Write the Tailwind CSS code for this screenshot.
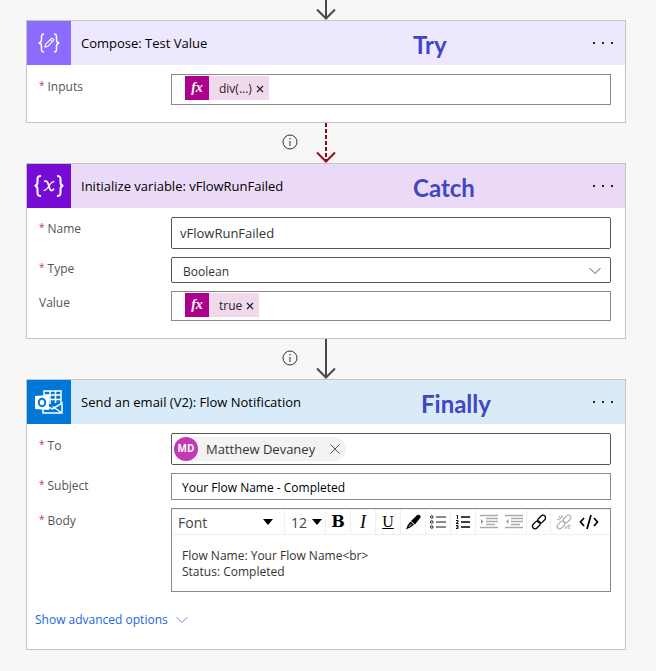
<!DOCTYPE html>
<html lang="en">
<head>
    <meta charset="UTF-8" />
    <meta name="viewport" content="width=device-width, initial-scale=1.0" />
    <title>Flow - Try, Catch, Finally</title>
    <script src="https://cdn.jsdelivr.net/npm/@tailwindcss/browser@4"></script>
</head>
<body class="bg-[#f7f7f7] font-['Open_Sans','Noto_Sans',sans-serif] text-xs text-[#333]">
    <main class="pl-[26px] pr-[30px] pb-5">
        <div class="flex h-5 justify-center">
            <svg class="h-5 w-6" viewBox="0 0 24 20" fill="none" stroke="#484848" stroke-width="2"><path d="M12 0v18M3 9.500l9 9 9-9" /></svg>
        </div>

        <!-- Try -->
        <section class="border border-[#c4c4c4] bg-white">
            <header class="relative flex h-11 items-center bg-[#ede8fe] text-black">
                <div class="flex size-11 shrink-0 items-center justify-center bg-[#8c6cff]">
                    <svg class="size-6" viewBox="0 0 24 24" fill="none" stroke="#fff" stroke-width="1.500">
                        <path d="M7 3C4.500 3 4.500 4 4.500 6v3c0 2-1 2.800-2.800 3 1.800.2 2.800 1 2.800 3v3c0 2 0 3 2.500 3M17 3c2.500 0 2.500 1 2.500 3v3c0 2 1 2.800 2.800 3-1.800.2-2.800 1-2.800 3v3c0 2 0 3-2.500 3" />
                        <path d="M8 16l.8-3 5.600-5.400c1.200-1 3 .8 2 2L11 15.200zM13.300 8.700l2 2" stroke-width="1.100" />
                    </svg>
                </div>
                <h2 class="pt-px pl-[10px] text-[13px]">Compose: Test Value</h2>
                <span class="absolute left-[386px] pt-1 font-['Lato',sans-serif] text-2xl font-bold text-[#4146c2]">Try</span>
                <button type="button" aria-label="More" class="ml-auto mr-3 flex w-5 justify-between"><i class="size-[2px] bg-[#222]"></i><i class="size-[2px] bg-[#222]"></i><i class="size-[2px] bg-[#222]"></i></button>
            </header>
            <div class="grid grid-cols-[132px_1fr] pt-[9px] pr-[14px] pb-[17px] pl-3">
                <span class="flex gap-[3px] pt-[5px] text-[#555]"><span class="text-[10px] text-[#d13438]">*</span>Inputs</span>
                <div class="flex h-[31px] items-start border border-[#8a8a8a] pt-px pl-[13px]">
                    <div class="flex h-6 items-center bg-[#f1d9ec] pr-[3px]">
                        <span class="flex size-6 items-center justify-center bg-[#ad008c] font-['Liberation_Serif',serif] text-sm font-bold italic text-white">fx</span>
                        <span class="pt-[2px] pl-[10px] text-[#222]">div(...)</span>
                        <button type="button" aria-label="Remove" class="ml-[2px] px-[2px] pt-[2px]"><svg class="size-2" viewBox="0 0 8 8" stroke="#222" stroke-width="1.200"><path d="M1 1l6 6M7 1L1 7" /></svg></button>
                    </div>
                </div>
            </div>
        </section>

        <div class="relative flex h-10 justify-center">
            <svg class="absolute top-[11px] left-[256px] size-4" viewBox="0 0 16 16" fill="none" stroke="#333"><circle cx="8" cy="8" r="7" /><path d="M8 7v5M8 4v1.500" /></svg>
            <svg class="h-10 w-6" viewBox="0 0 24 40" fill="none" stroke="#8b0a14" stroke-width="2"><path d="M12 0v38" stroke-dasharray="4 2" /><path d="M3 29.500l9 9 9-9" stroke="#a00a12" /></svg>
        </div>

        <!-- Catch -->
        <section class="border border-[#c4c4c4] bg-white">
            <header class="relative flex h-11 items-center bg-[#ebdaf7] text-black">
                <div class="flex size-11 shrink-0 items-center justify-center bg-[#770bd6]">
                    <svg class="h-6 w-8" viewBox="0 0 32 24" fill="none" stroke="#fff" stroke-width="2">
                        <path d="M8 2C5 2 4.500 3 4.500 5v3.500c0 2-.8 3-2.800 3.200 2 .2 2.800 1.200 2.800 3.200V19c0 2 .5 3 3.500 3M24 2c3 0 3.500 1 3.500 3v3.500c0 2 .8 3 2.800 3.200-2 .2-2.800 1.200-2.800 3.200V19c0 2-.5 3-3.500 3" />
                        <path d="M11 7.500c2-1 3.300-.4 4.100 2.100l1.600 5.200c.7 2.200 2.500 2.400 4.300 0" stroke-width="1.800" />
                        <path d="M21.500 7.800c-2.500-.8-3.800 1.500-5.500 4.200-1.700 2.800-3 4.900-5.500 4.300" stroke-width="1.300" />
                    </svg>
                </div>
                <h2 class="pt-px pl-[10px] text-[13px]">Initialize variable: vFlowRunFailed</h2>
                <span class="absolute left-[386px] pt-1 font-['Lato',sans-serif] text-2xl font-bold text-[#4146c2]">Catch</span>
                <button type="button" aria-label="More" class="ml-auto mr-3 flex w-5 justify-between"><i class="size-[2px] bg-[#222]"></i><i class="size-[2px] bg-[#222]"></i><i class="size-[2px] bg-[#222]"></i></button>
            </header>
            <div class="grid grid-cols-[132px_1fr] gap-y-2 pt-[9px] pr-[14px] pb-[17px] pl-3">
                <label for="name" class="flex gap-[3px] pt-1 text-[#555]"><span class="text-[10px] text-[#d13438]">*</span>Name</label>
                <input id="name" type="text" value="vFlowRunFailed" class="h-8 w-full rounded-xs border border-[#555] px-2 text-[13px]" />
                <label for="type" class="flex gap-[3px] pt-1 text-[#555]"><span class="text-[10px] text-[#d13438]">*</span>Type</label>
                <div class="relative">
                    <select id="type" class="block h-[26px] w-full appearance-none rounded-xs border border-[#555] px-[11px] pt-[3px]"><option>Boolean</option></select>
                    <svg class="pointer-events-none absolute top-[10px] right-[10px] h-2 w-3" viewBox="0 0 12 8" fill="none" stroke="#555"><path d="M.5 1L6 6.500 11.500 1" /></svg>
                </div>
                <span class="pt-1 text-[#555]">Value</span>
                <div class="flex h-[30px] items-start border border-[#8a8a8a] pt-px pl-[13px]">
                    <div class="flex h-6 items-center bg-[#f1d9ec] pr-[3px]">
                        <span class="flex size-6 items-center justify-center bg-[#ad008c] font-['Liberation_Serif',serif] text-sm font-bold italic text-white">fx</span>
                        <span class="pt-[2px] pl-[10px] text-[#222]">true</span>
                        <button type="button" aria-label="Remove" class="ml-[2px] px-[2px] pt-[2px]"><svg class="size-2" viewBox="0 0 8 8" stroke="#222" stroke-width="1.200"><path d="M1 1l6 6M7 1L1 7" /></svg></button>
                    </div>
                </div>
            </div>
        </section>

        <div class="relative flex h-10 justify-center">
            <svg class="absolute top-[11px] left-[256px] size-4" viewBox="0 0 16 16" fill="none" stroke="#333"><circle cx="8" cy="8" r="7" /><path d="M8 7v5M8 4v1.500" /></svg>
            <svg class="h-10 w-6" viewBox="0 0 24 40" fill="none" stroke="#484848" stroke-width="2"><path d="M12 0v38M3 29.500l9 9 9-9" /></svg>
        </div>

        <!-- Finally -->
        <section class="border border-[#c4c4c4] bg-white">
            <header class="relative flex h-11 items-center bg-[#d9eaf8] text-black">
                <div class="flex size-11 shrink-0 items-center justify-center bg-[#0078d7]">
                    <svg class="size-7" viewBox="0 0 28 28" fill="none" stroke="#fff" stroke-width="1.500">
                        <path d="M9 8V3h17v14M9 7h17M9 11.500h17M15 3v13M20.500 3v12M8 21v4h19V15l-9.500 6L10 18M27 25l-9.500-6.500" />
                        <path d="M0 8l14-1v15L0 21z" fill="#fff" stroke="none" />
                        <ellipse cx="7" cy="14.500" rx="3.200" ry="3.700" stroke="#0078d7" stroke-width="2" />
                    </svg>
                </div>
                <h2 class="pt-px pl-[10px] text-[13px]">Send an email (V2): Flow Notification</h2>
                <span class="absolute left-[394px] pt-1 font-['Lato',sans-serif] text-2xl font-bold text-[#4146c2]">Finally</span>
                <button type="button" aria-label="More" class="ml-auto mr-3 flex w-5 justify-between"><i class="size-[2px] bg-[#222]"></i><i class="size-[2px] bg-[#222]"></i><i class="size-[2px] bg-[#222]"></i></button>
            </header>
            <div class="grid grid-cols-[132px_1fr] gap-y-2 pt-[9px] pr-[14px] pl-3">
                <span class="flex gap-[3px] pt-[5px] text-[#555]"><span class="text-[10px] text-[#d13438]">*</span>To</span>
                <div class="flex h-8 items-center rounded-xs border border-[#555] px-[2px]">
                    <div class="flex h-6 items-center rounded-full bg-[#f3f3f3] pr-[5px]">
                        <span class="flex size-6 items-center justify-center rounded-full bg-[#c239b3] text-[10px] font-bold text-white">MD</span>
                        <span class="pt-[2px] pl-2 text-[13px]">Matthew Devaney</span>
                        <button type="button" aria-label="Remove" class="ml-[14px] p-px"><svg class="size-[10px]" viewBox="0 0 10 10" stroke="#555"><path d="M.5 .5l9 9M9.500 .5l-9 9" /></svg></button>
                    </div>
                </div>
                <label for="subject" class="flex gap-[3px] pt-[5px] text-[#555]"><span class="text-[10px] text-[#d13438]">*</span>Subject</label>
                <input id="subject" type="text" value="Your Flow Name - Completed" class="h-[27px] w-full border border-[#8a8a8a] px-[10px] pt-[2px] text-black" />
                <label for="body" class="flex gap-[3px] pt-[5px] text-[#555]"><span class="text-[10px] text-[#d13438]">*</span>Body</label>
                <div class="h-[84px] border border-[#8a8a8a]">
                    <div class="flex h-[26px] border-y border-[#efefef] text-black">
                        <div class="relative w-[113px]">
                            <select aria-label="Font" class="h-6 w-full appearance-none border-r border-[#efefef] pt-px pl-[6px] text-sm text-[#444]"><option>Font</option></select>
                            <svg class="pointer-events-none absolute top-[9px] right-3 h-[6px] w-[10px]" viewBox="0 0 10 6"><path d="M0 0h10L5 6z" /></svg>
                        </div>
                        <div class="relative w-[41px]">
                            <select aria-label="Font size" class="h-6 w-full appearance-none border-r border-[#efefef] pt-px pl-[6px] text-sm text-[#444]"><option>12</option></select>
                            <svg class="pointer-events-none absolute top-[9px] right-1 h-[6px] w-[10px]" viewBox="0 0 10 6"><path d="M0 0h10L5 6z" /></svg>
                        </div>
                        <button type="button" class="w-[25px] border-r border-[#efefef] font-['DejaVu_Serif',serif] text-base leading-6 font-bold">B</button>
                        <button type="button" class="w-[25px] border-r border-[#efefef] font-['Liberation_Serif',serif] text-lg leading-6 italic">I</button>
                        <button type="button" class="w-[25px] border-r border-[#efefef] font-['Liberation_Serif',serif] text-base leading-6 underline">U</button>
                        <button type="button" aria-label="Highlight" class="flex w-[25px] items-center justify-center border-r border-[#efefef]">
                            <svg class="size-4" viewBox="0 0 16 16"><path d="M12 1.200c2-1.500 4.500.5 3.300 2.600L10 10.500 6 7zM5.500 7.500L9 10.800 5 13.500 1 15.500l1.500-4z" /><path d="M4 12.500l2.500-2.500" stroke="#fff" /></svg>
                        </button>
                        <button type="button" aria-label="Bullets" class="flex w-[25px] items-center justify-center border-r border-[#efefef]">
                            <svg class="size-4" viewBox="0 0 16 16" fill="none" stroke="#222"><path d="M6 3h10M6 8h10M6 13h10" stroke="#666" stroke-width="1.500" /><circle cx="1.800" cy="3" r="1.300" /><circle cx="1.800" cy="8" r="1.300" /><circle cx="1.800" cy="13" r="1.300" /></svg>
                        </button>
                        <button type="button" aria-label="Numbering" class="flex w-[25px] items-center justify-center border-r border-[#efefef]">
                            <svg class="size-4" viewBox="0 0 16 16" fill="none" stroke="#000"><path d="M6 3h9M6 8h9M6 13h9" stroke-width="1.600" /><path d="M1.500 1.500h1V5M1 6.500h2V8L1 9.500h2.500M1 11.500h2v3H1M1.500 13H3" /></svg>
                        </button>
                        <button type="button" aria-label="Indent" class="flex w-[25px] items-center justify-center">
                            <svg class="h-4 w-[18px]" viewBox="0 0 18 16" stroke="#aaa" fill="#999"><path d="M0 1.500h18M6 4.500h12M6 7.500h12M6 10.500h9M0 13.500h18" stroke-width="1.300" /><path d="M1 5l2.500 2.500L1 10z" stroke="none" /></svg>
                        </button>
                        <button type="button" aria-label="Outdent" class="flex w-[25px] items-center justify-center">
                            <svg class="h-4 w-[18px]" viewBox="0 0 18 16" stroke="#aaa" fill="#999"><path d="M0 1.500h18M6 4.500h12M6 7.500h12M6 10.500h9M0 13.500h18" stroke-width="1.300" /><path d="M3.500 5L1 7.500 3.500 10z" stroke="none" /></svg>
                        </button>
                        <button type="button" aria-label="Link" class="flex w-[25px] items-center justify-center border-x border-[#efefef]">
                            <svg class="size-4" viewBox="0 0 16 16" fill="none" stroke="#000" stroke-width="1.300"><rect x="-4.500" y="-2.600" width="9" height="5.200" rx="2.600" transform="translate(10.600 5.200) rotate(-45)" /><rect x="-4.500" y="-2.600" width="9" height="5.200" rx="2.600" transform="translate(5.400 10.800) rotate(-45)" /></svg>
                        </button>
                        <button type="button" aria-label="Unlink" class="flex w-[25px] items-center justify-center">
                            <svg class="size-4" viewBox="0 0 16 16" fill="none" stroke="#aaa" stroke-width="1.200"><rect x="-4.500" y="-2.500" width="9" height="5" rx="2.500" transform="translate(11 5) rotate(-45)" /><rect x="-4.500" y="-2.500" width="9" height="5" rx="2.500" transform="translate(5 11) rotate(-45)" /><path d="M3 2l2 3M1 5l3 1M6 1v3M10 12v3M12 11l3 1M11.500 12l2 3" /></svg>
                        </button>
                        <button type="button" aria-label="Code view" class="flex w-[25px] items-center justify-center">
                            <svg class="h-4 w-5" viewBox="0 0 20 16" fill="none" stroke="#000" stroke-width="1.700"><path d="M5 4L1.500 8 5 12M15 4l3.500 4L15 12M12 1L8 15" /></svg>
                        </button>
                    </div>
                    <textarea id="body" class="block h-14 w-full resize-none px-[10px] pt-[13px] leading-4">Flow Name: Your Flow Name&lt;br&gt;
Status: Completed</textarea>
                </div>
            </div>
            <a href="#" class="flex h-[57px] items-center gap-2 pb-[2px] pl-2 text-[#2266e3]">Show advanced options
                <svg class="h-2 w-3" viewBox="0 0 12 8" fill="none" stroke="#6a8fdc"><path d="M.5 1L6 6.500 11.500 1" /></svg>
            </a>
        </section>
    </main>
</body>
</html>
